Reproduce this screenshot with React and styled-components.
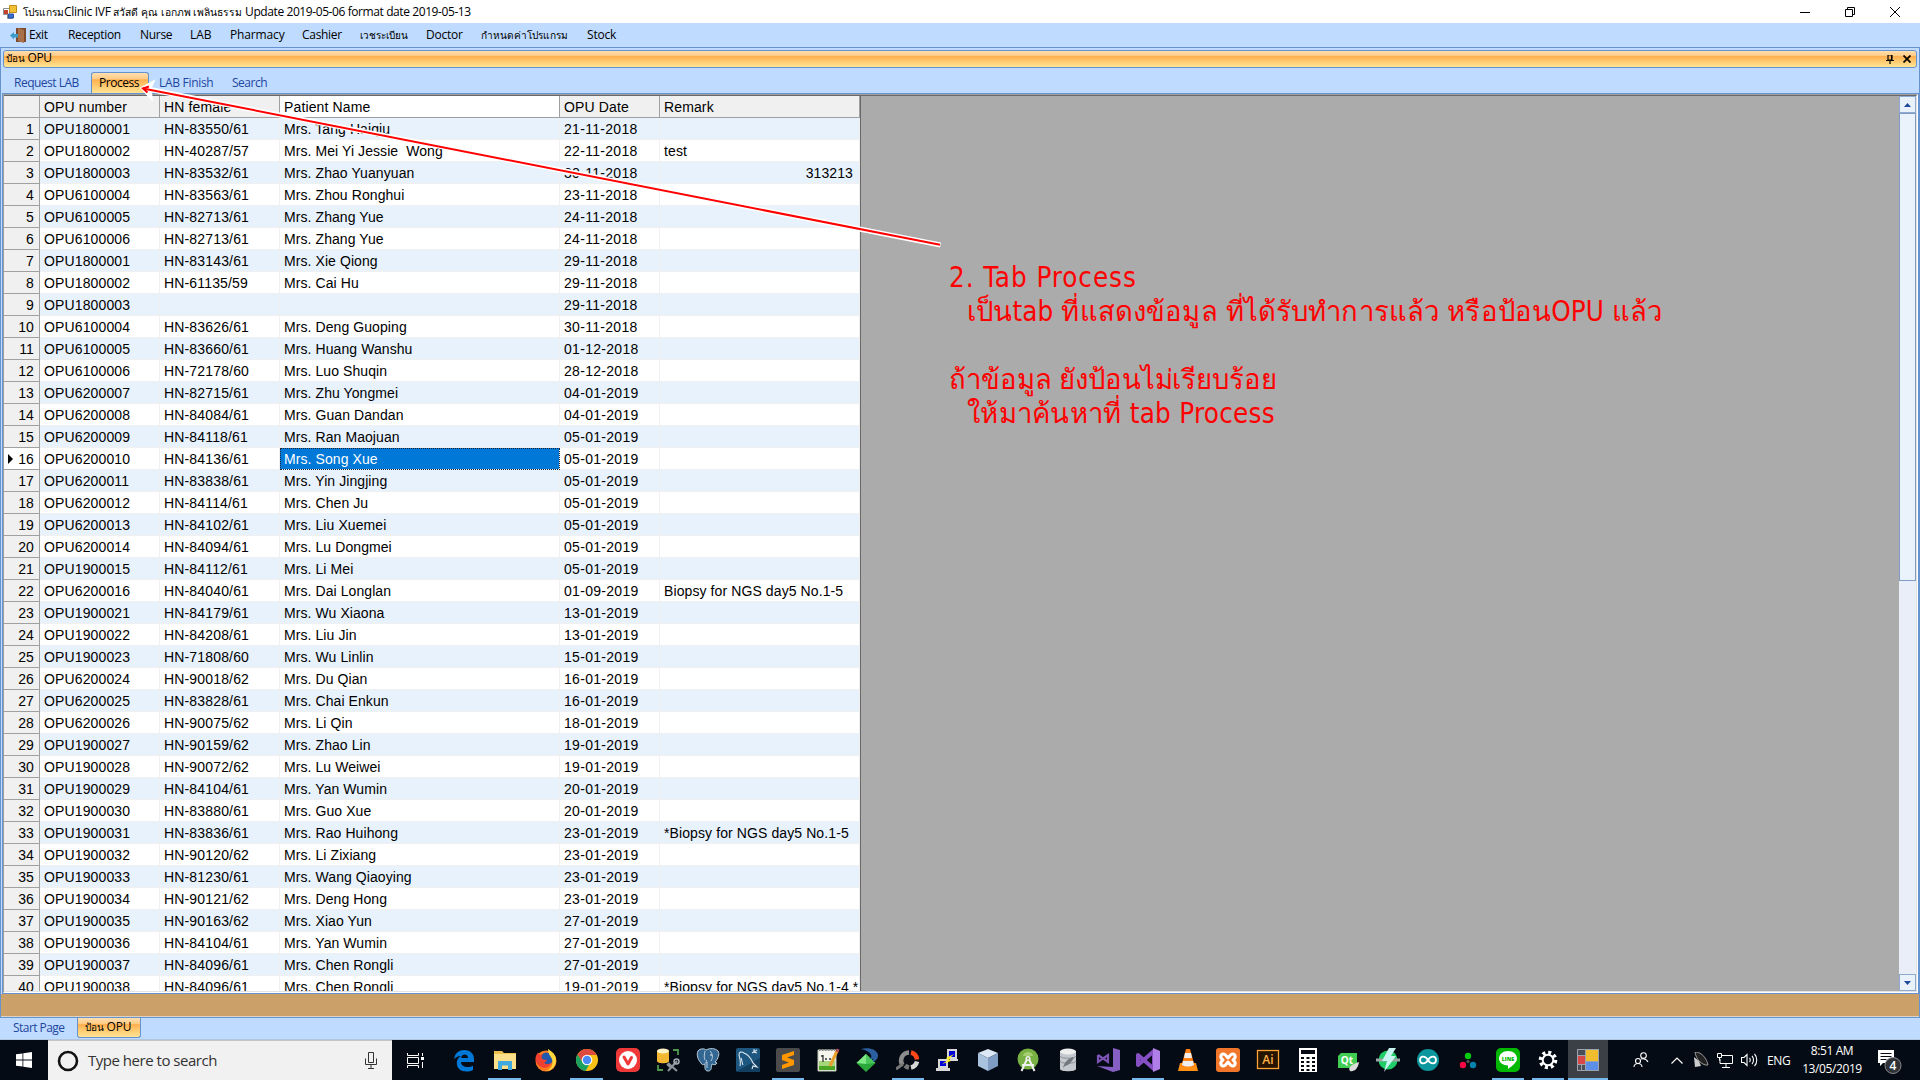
import React from "react";
import styled, { createGlobalStyle, css } from "styled-components";

const ui = `"Open Sans", "Noto Sans", "DejaVu Sans", sans-serif`;
const gridFont = `"Liberation Sans", "DejaVu Sans", sans-serif`;
const orange = "linear-gradient(#ffdfaf 0%, #ffcb85 30%, #ffb050 34%, #ffc76c 62%, #ffe596 100%)";

const Global = createGlobalStyle`
  * { box-sizing: border-box; }
  html, body { margin: 0; overflow: hidden; background: #bfdbff; }
  svg { display: block; flex: none; }
`;

const Screen = styled.div`
  position: relative;
  width: 1920px;
  height: 1080px;
  display: flex;
  flex-direction: column;
  overflow: hidden;
  font-family: ${ui};
  font-size: 12px;
  color: #000;
`;

const Row = styled.div`
  display: flex;
  align-items: center;
`;

const TitleBar = styled(Row)`
  height: 23px;
  flex: none;
  background: #fff;
  padding: 0 0 0 3px;
`;
const TitleText = styled.div`
  display: flex;
  margin-left: 6px;
  white-space: pre;
  line-height: 22px;
`;
const WindowButtons = styled(Row)`
  margin-left: auto;
  margin-right: 20px;
  gap: 35px;
  height: 20px;
`;

const MenuBar = styled(Row)`
  height: 24px;
  flex: none;
  background: #bfdbff;
  padding-left: 10px;
`;
const MenuItem = styled.div`
  width: ${(p) => p.$w}px;
  flex: none;
  white-space: nowrap;
  line-height: 24px;
  ${(p) => p.$ls !== undefined && css`letter-spacing: ${p.$ls}px;`}
  ${(p) => p.$fs && css`font-size: ${p.$fs}px;`}
`;
const MenuIcon = styled.div`
  width: 19px;
  flex: none;
`;
const Label = styled.span`
  display: inline-block;
  white-space: pre;
  ${(p) => p.$ls !== undefined && css`letter-spacing: ${p.$ls}px;`}
  ${(p) => p.$fs && css`font-size: ${p.$fs}px;`}
`;

const DockWindow = styled.div`
  height: 971px;
  flex: none;
  display: flex;
  flex-direction: column;
  border: 1px solid #6593cf;
`;
const DockTitle = styled(Row)`
  height: 18px;
  margin: 2px 2px 0;
  flex: none;
  border: 1px solid #6593cf;
  border-radius: 3px;
  background: ${orange};
  padding: 0 5px 0 2px;
  justify-content: space-between;
`;
const DockCaption = styled.div`
  margin-top: -2px;
  line-height: 15px;
`;
const DockActions = styled(Row)`
  gap: 9px;
`;
const TabStrip = styled.div`
  display: flex;
  align-items: flex-end;
  height: 25px;
  flex: none;
  padding-left: 13px;
  color: #1e46a0;
`;
const Tab = styled.div`
  width: ${(p) => p.$w}px;
  height: 21px;
  line-height: 22px;
  white-space: nowrap;
  letter-spacing: ${(p) => p.$ls || 0}px;
  ${(p) =>
    p.$active &&
    css`
      color: #000;
      line-height: 20px;
      border: 1px solid #6593cf;
      border-bottom: 0;
      border-radius: 3px 3px 0 0;
      background: ${orange};
      padding-left: 7px;
      margin-right: 10px;
    `}
`;

const GridFrame = styled.div`
  height: 901px;
  flex: none;
  margin-left: 1px;
  border: 1px solid #6593cf;
`;
const GridView = styled.div`
  height: 899px;
  display: flex;
  border-top: 1px solid #a0a0a0;
  border-left: 1px solid #a0a0a0;
  border-right: 1px solid #fff;
  border-bottom: 1px solid #fff;
  background: #ababab;
  overflow: hidden;
`;
const GridInner = styled.div`
  flex: 1;
  display: flex;
  border-top: 1px solid #696969;
  border-bottom: 1px solid #e3e3e3;
  border-right: 1px solid #e3e3e3;
  overflow: hidden;
`;
const Table = styled.div`
  width: 857px;
  flex: none;
  border-right: 1px solid #696969;
  overflow: hidden;
  font-family: ${gridFont};
  font-size: 14px;
  letter-spacing: 0.13px;
  line-height: 21px;
  margin-right: auto;
`;
const GridRow = styled.div`
  display: grid;
  grid-template-columns: 36px 120px 120px 280px 100px 200px;
  height: 22px;
  background: ${(p) => (p.$odd ? "#e8f2fd" : "#fff")};
`;
const Cell = styled.div`
  border-right: 1px solid #f0f0f0;
  border-bottom: 1px solid #f0f0f0;
  padding: 1px 6px 0 4px;
  white-space: pre;
  overflow: hidden;
  height: 22px;
  text-align: ${(p) => (p.$right ? "right" : "left")};
  ${(p) => p.$ls && css`letter-spacing: ${p.$ls}px;`}
  ${(p) =>
    p.$selected &&
    css`
      background: #0078d7;
      color: #fff;
      outline: 1px dotted #1a2a3a;
      outline-offset: -1px;
    `}
`;
const HeadCell = styled(Cell)`
  background: ${(p) => (p.$white ? "#fff" : "#f0f0f0")};
  border-color: #a0a0a0;
`;
const NumberCell = styled(HeadCell)`
  display: flex;
  align-items: center;
  justify-content: flex-end;
  padding: 1px 5px 0 3px;
`;
const CurrentMark = styled.i`
  margin-right: auto;
  margin-left: 1px;
  border: 5px solid transparent;
  border-left-color: #000;
  border-right-width: 0;
`;

const ScrollBar = styled.div`
  width: 17px;
  display: flex;
  flex-direction: column;
  background: #e9f0fa;
`;
const ScrollButton = styled.div`
  height: 17px;
  flex: none;
  display: flex;
  align-items: center;
  justify-content: center;
  border: 1px solid #8faad0;
  background: #e9f1fb;
`;
const Thumb = styled.div`
  height: 468px;
  border: 1px solid #7f9bc4;
  background: #eaf2fb;
`;
const Track = styled.div`
  flex: 1;
  background: #e9eef8;
`;

const BrownBar = styled.div`
  flex: 1;
  background: #cca169;
  border-bottom: 1px solid #e0d2bf;
`;
const BottomTabs = styled(Row)`
  height: 22px;
  flex: none;
  align-items: flex-start;
  padding-left: 13px;
  color: #1e46a0;
  border-bottom: 1px solid #b3c6de;
`;
const BottomTab = styled.div`
  width: ${(p) => p.$w}px;
  height: 20px;
  line-height: 20px;
  white-space: nowrap;
  letter-spacing: -0.55px;
  ${(p) =>
    p.$active &&
    css`
      color: #000;
      line-height: 17px;
      letter-spacing: 0;
      border: 1px solid #6593cf;
      border-top: 0;
      border-radius: 0 0 3px 3px;
      background: ${orange};
      padding-left: 7px;
    `}
`;

const Annotation = styled.svg`
  position: absolute;
  left: 0;
  top: 0;
  pointer-events: none;
`;
const Note = styled.div`
  position: absolute;
  left: 949px;
  top: 260px;
  color: #f00;
  font-family: "DejaVu Sans Condensed", "Noto Sans", sans-serif;
  font-size: 27.5px;
  line-height: 34px;
  white-space: pre;
`;
const NoteLine = styled.div`
  height: 34px;
  padding-left: ${(p) => p.$indent || 0}px;
  letter-spacing: ${(p) => p.$ls || 0}px;
`;

const TaskBar = styled.div`
  height: 40px;
  flex: none;
  display: flex;
  background: #050b14;
  color: #fff;
`;
const Start = styled.div`
  width: 48px;
  display: grid;
  place-items: center;
`;
const SearchBox = styled(Row)`
  width: 344px;
  background: #f1f1f1;
  border-top: 1px solid #c4c4c4;
  padding: 0 15px 0 9px;
  color: #333;
  font-size: 15px;
`;
const SearchLabel = styled.div`
  margin: -2px 0 0 9px;
  flex: 1;
  letter-spacing: -0.48px;
`;
const TaskView = styled.div`
  width: 51px;
  display: flex;
  align-items: center;
  padding-left: 15px;
`;
const Apps = styled.div`
  display: grid;
  grid-template-columns: repeat(5, 41px) repeat(3, 40px) repeat(21, 40px);
`;
const AppButton = styled.div`
  display: grid;
  place-items: center;
  position: relative;
  background: ${(p) => (p.$active ? "#3b3f46" : "transparent")};
  &::after {
    content: "";
    position: absolute;
    bottom: 0;
    left: ${(p) => (p.$active ? 0 : 4)}px;
    right: ${(p) => (p.$active ? 0 : 4)}px;
    height: 2px;
    background: ${(p) => (p.$open ? "#76b9ed" : "transparent")};
  }
`;
const Tray = styled(Row)`
  flex: 1;
  padding-left: 25px;
`;
const TrayItem = styled.div`
  width: ${(p) => p.$w}px;
  flex: none;
  white-space: nowrap;
  letter-spacing: -0.3px;
`;
const Clock = styled.div`
  width: 76px;
  text-align: center;
  line-height: 18px;
  letter-spacing: -0.4px;
`;
const Notifications = styled.svg`
  margin-top: 4px;
`;

const rows = `OPU1800001|83550/61|Tang Haiqiu|21-11-2018
OPU1800002|40287/57|Mei Yi Jessie  Wong|22-11-2018|test
OPU1800003|83532/61|Zhao Yuanyuan|30-11-2018|313213
OPU6100004|83563/61|Zhou Ronghui|23-11-2018
OPU6100005|82713/61|Zhang Yue|24-11-2018
OPU6100006|82713/61|Zhang Yue|24-11-2018
OPU1800001|83143/61|Xie Qiong|29-11-2018
OPU1800002|61135/59|Cai Hu|29-11-2018
OPU1800003|||29-11-2018
OPU6100004|83626/61|Deng Guoping|30-11-2018
OPU6100005|83660/61|Huang Wanshu|01-12-2018
OPU6100006|72178/60|Luo Shuqin|28-12-2018
OPU6200007|82715/61|Zhu Yongmei|04-01-2019
OPU6200008|84084/61|Guan Dandan|04-01-2019
OPU6200009|84118/61|Ran Maojuan|05-01-2019
OPU6200010|84136/61|Song Xue|05-01-2019
OPU6200011|83838/61|Yin Jingjing|05-01-2019
OPU6200012|84114/61|Chen Ju|05-01-2019
OPU6200013|84102/61|Liu Xuemei|05-01-2019
OPU6200014|84094/61|Lu Dongmei|05-01-2019
OPU1900015|84112/61|Li Mei|05-01-2019
OPU6200016|84040/61|Dai Longlan|01-09-2019|Biopsy for NGS day5 No.1-5
OPU1900021|84179/61|Wu Xiaona|13-01-2019
OPU1900022|84208/61|Liu Jin|13-01-2019
OPU1900023|71808/60|Wu Linlin|15-01-2019
OPU6200024|90018/62|Du Qian|16-01-2019
OPU6200025|83828/61|Chai Enkun|16-01-2019
OPU6200026|90075/62|Li Qin|18-01-2019
OPU1900027|90159/62|Zhao Lin|19-01-2019
OPU1900028|90072/62|Lu Weiwei|19-01-2019
OPU1900029|84104/61|Yan Wumin|20-01-2019
OPU1900030|83880/61|Guo Xue|20-01-2019
OPU1900031|83836/61|Rao Huihong|23-01-2019|*Biopsy for NGS day5 No.1-5
OPU1900032|90120/62|Li Zixiang|23-01-2019
OPU1900033|81230/61|Wang Qiaoying|23-01-2019
OPU1900034|90121/62|Deng Hong|23-01-2019
OPU1900035|90163/62|Xiao Yun|27-01-2019
OPU1900036|84104/61|Yan Wumin|27-01-2019
OPU1900037|84096/61|Chen Rongli|27-01-2019
OPU1900038|84096/61|Chen Rongli|19-01-2019|*Biopsy for NGS day5 No.1-4 *`
  .split("\n")
  .map((line) => line.split("|"));

const Icon = ({ children, s = 24 }) => (
  <svg width={s} height={s} viewBox="0 0 24 24">
    {children}
  </svg>
);

const icons = {
  edge: (
    <Icon>
      <path fill="#0078d7" d="M2 11C3 5 7 2 12.500 2 18.500 2 22 6 22 11v3H9c0 3.500 3 5 6.500 5 2.300 0 4.300-.6 5.500-1.300V22c-2 1-4 1.500-6.500 1.500C8.500 23.500 4.800 20 4.800 15c0-3.200 1.700-5.500 4.200-7C5.500 8 3.500 9.500 2 11zm7.200-1H16c0-2.200-1.300-3.500-3.300-3.500-2 0-3.200 1.400-3.500 3.500z" />
    </Icon>
  ),
  folder: (
    <Icon>
      <path fill="#eabf4e" d="M1 3h8l2 2h12v4H1z" />
      <path fill="#fde08a" d="M1 6h22v15H1z" />
      <path fill="#3fa9e0" d="M5 13h14v9h-4v-4.500H9V22H5z" />
    </Icon>
  ),
  firefox: (
    <Icon>
      <circle cx="12" cy="13" r="10.500" fill="#ff7b1c" />
      <circle cx="12.500" cy="11" r="6.500" fill="#1f58ac" />
      <path fill="#f0402f" d="M1.500 11c0-3 1-4.500 2.500-6.500L6 7l3-.5c-1 1-2 2-1 4 1 1.500 3 1 5 1.500-1 2-2 2-3 3 2 1.500 5 1.500 7-.5-1 4-5 6.500-9 5C4 18 2 15 1.500 11z" />
      <path fill="#ffd83d" d="M14 1c5 3 8.500 7 8 12-.5 6-5 10-10 10 4-1.500 7-5 6.500-10C18 9 14 7 14 1z" />
    </Icon>
  ),
  chrome: (
    <Icon>
      <circle cx="12" cy="12" r="11" fill="#fbc116" />
      <path fill="#dd4b3e" d="M2.500 6.500a11 11 0 0 1 19 0L22 7H12L7 14z" />
      <path fill="#1aa15f" d="M2.500 6.500 8 15l6 2-3.500 6A11 11 0 0 1 2.500 6.500z" />
      <circle cx="12" cy="12" r="5.300" fill="#fff" />
      <circle cx="12" cy="12" r="4.200" fill="#4a8af4" />
    </Icon>
  ),
  vivaldi: (
    <Icon>
      <rect width="24" height="24" rx="5" fill="#ef3939" />
      <circle cx="12" cy="12" r="9" fill="#fff" />
      <path fill="none" stroke="#ef3939" strokeWidth="3" strokeLinecap="round" strokeLinejoin="round" d="m8 9 4 7 3.500-6.500" />
    </Icon>
  ),
  dbtools: (
    <Icon>
      <path d="M17 2h5v5M2 17v5h5" fill="none" stroke="#4c9a4a" strokeWidth="1.800" />
      <path fill="#f4b731" d="M1 3v10c0 3 12 3 12 0V3z" />
      <ellipse cx="7" cy="3" rx="6" ry="2.500" fill="#fff3c4" />
      <path d="m12 15 9 8m-9 0 9-10m-7 6-3-3" stroke="#8d959c" strokeWidth="2" fill="none" />
      <circle cx="20.500" cy="13.500" r="2.500" fill="none" stroke="#a4abb1" strokeWidth="1.500" />
    </Icon>
  ),
  postgres: (
    <Icon>
      <path fill="#336791" stroke="#b9cede" strokeWidth="1" d="M3 2c3-2 6-1 7 0 4-2 9-2 12 1 2 3 0 8-3 11l2 1c-1 2-3 2-5 1-1 3 0 7-4 7s-3-5-3-7c-2 1-3 1-4-1C1 11 0 4 3 2z" />
      <path d="M9 3c-1 4-1 7 0 9m5-9c3 3 3 7 1 10m-4 1v6m-2-5c2 0 2-1 1-3" fill="none" stroke="#b9cede" />
      <circle cx="15" cy="7" r=".8" fill="#fff" />
    </Icon>
  ),
  mysql: (
    <Icon>
      <rect width="24" height="24" rx="2" fill="#1d567e" />
      <path d="M0 24 24 10v14z" fill="#123f60" />
      <path fill="none" stroke="#dbe9f2" strokeWidth="1.100" d="M4 18c1-4 0-7-1-11 0-3 2-4 5-2 5 2 7 5 9 10l4 4-4-1-1 3M7 17c-1-2-1-5-2-7m11-5 5-3m-3-1v3l3 1" />
    </Icon>
  ),
  sublime: (
    <Icon>
      <rect width="24" height="24" rx="2" fill="#4b4b4b" />
      <path fill="#ff9800" d="m6 7 12-4v4l-7 2.500 7 2.500v5L6 21v-4l7-2.500L6 12z" />
    </Icon>
  ),
  notepad: (
    <Icon>
      <path fill="#f5f5ee" stroke="#b9c4b0" d="M2 2h18v21H2z" />
      <path fill="#a5d67a" d="M3 13h16v9H3z" />
      <path fill="#4da524" d="M3 18h16v4H3z" />
      <path d="M3 2h16" stroke="#888" strokeDasharray="1.500 1.500" strokeWidth="2" />
      <path d="M7 7v7M5 8h2M9 11h2m2 0h2" stroke="#333" strokeWidth="1.300" />
      <path d="m21 3-7 15" stroke="#e9a02c" strokeWidth="3" />
      <path d="m22 1-1 3" stroke="#b5505b" strokeWidth="3" />
    </Icon>
  ),
  diamond: (
    <Icon>
      <path fill="#2aa83c" d="m10 6 9.500 9L10 24 .5 15z" />
      <path fill="#7fe887" d="m10 6-9.500 9L10 16z" />
      <path fill="#4ac75a" d="m10 6 9.500 9L10 16z" />
      <path fill="#2b5f9f" d="M5 1c9-2 16 1 17 6 0 3-1 5-5 7v-3h-4c4-1 4-7-8-10z" />
    </Icon>
  ),
  ring: (
    <Icon>
      <path fill="none" stroke="#8c8c8c" strokeWidth="4.500" d="M6.500 17a8 8 0 0 1 6.500-12.500" />
      <path fill="none" stroke="#ff4719" strokeWidth="4.500" d="M15 4.500a8 8 0 0 1 6 7" />
      <path fill="none" stroke="#d7d7d7" strokeWidth="4.500" d="M21 13.500a8 8 0 0 1-6 6" />
      <path fill="none" stroke="#777" strokeWidth="4.500" d="M13 19.500a8 8 0 0 1-4-2" />
      <path d="m0 21 7-5" stroke="#777" strokeWidth="3" />
    </Icon>
  ),
  putty: (
    <Icon>
      <path fill="#d8d8d8" d="M11 1h10v10H11zM2 11h10v9H2zM0 20h14v3H0zM14 11h8v2h-8z" />
      <path fill="#0000d8" d="M13 3h6v6h-6zM4 13h6v5H4z" />
      <path fill="#ffee20" d="m18 6-8 4 2 2-6 4 9-3-2-2z" />
    </Icon>
  ),
  cube: (
    <Icon>
      <path fill="#dce9f5" d="m12 1 10 4-10 5L2 5z" />
      <path fill="#a9c2dd" d="M2 5l10 5v13L2 18z" />
      <path fill="#7f9cc2" d="m22 5-10 5v13l10-5z" />
    </Icon>
  ),
  android: (
    <Icon>
      <circle cx="12" cy="11" r="10.500" fill="#78b043" />
      <path fill="#a4ce70" d="M7 8a5 4 0 0 1 10 0z" />
      <path fill="none" stroke="#eef1ee" strokeWidth="2" d="M12 9 5.500 23M12 9l6.500 14M6 17h12" />
      <circle cx="12" cy="10.500" r="2.500" fill="#eee" />
      <circle cx="12" cy="10.500" r="1" fill="#78b043" />
    </Icon>
  ),
  sqlite: (
    <Icon>
      <path fill="#c5c8cc" d="M4 3v18c0 3 16 3 16 0V3z" />
      <path fill="none" stroke="#8d9298" d="M4 8c0 3 16 3 16 0M4 13c0 3 16 3 16 0" />
      <ellipse cx="12" cy="3.500" rx="8" ry="3" fill="#eee" />
      <path fill="#73787d" d="M7 20C8 15 12 10 18 9c-2 5-5 8-9 9z" />
    </Icon>
  ),
  vs: (
    <Icon>
      <path fill="none" stroke="#7d54b5" strokeWidth="2.200" d="M2 7v7l10-7v7L2 7" />
      <path fill="#865fc5" d="m17 0 7 2v20l-7 2-16-6 16 1z" />
    </Icon>
  ),
  vs19: (
    <Icon>
      <path fill="none" stroke="#8650c4" strokeWidth="4" strokeLinejoin="round" d="m2 7 16 14V3L2 17z" />
      <path fill="#b07ee8" d="m17 0 7 3v18l-7 3z" />
    </Icon>
  ),
  vlc: (
    <Icon>
      <path fill="#ff9014" d="m4 15-2 8h20l-2-8z" />
      <path fill="#ff8010" d="m10 1-5 18h14L14 1z" />
      <path fill="#eee" d="m9 5-1 5h8l-1-5zm-2 8-1 4c3 2 9 2 12 0l-1-4z" />
    </Icon>
  ),
  xampp: (
    <Icon>
      <rect width="24" height="24" rx="3" fill="#f1762a" />
      <path fill="none" stroke="#fff" strokeWidth="3" strokeLinecap="round" strokeLinejoin="round" d="M9.500 7C5 4 3 9 7 12c-4 3-2 8 2.500 5L12 14l2.500 3c4.500 3 6.500-2 2.500-5 4-3 2-8-2.500-5L12 10z" />
    </Icon>
  ),
  ai: (
    <Icon>
      <rect x="1.500" y="2.500" width="21" height="18" fill="#261300" stroke="#ffa432" strokeWidth="1.300" />
      <text x="12" y="16" textAnchor="middle" fontFamily="Open Sans, sans-serif" fontWeight="600" fontSize="12" fill="#ffb04a">Ai</text>
    </Icon>
  ),
  calc: (
    <Icon>
      <path fill="#fff" d="M3 0h18v24H3z" />
      <path fill="#060b13" d="M5 2h14v4H5z" />
      <path stroke="#060b13" strokeWidth="2" strokeDasharray="3 2.500" d="M5 10h14M5 14h14M5 18h14M5 22h14" />
    </Icon>
  ),
  qt: (
    <Icon>
      <path fill="#41cd52" d="M5 5h16v12l-4 3H2V8z" />
      <text x="11" y="16" textAnchor="middle" fontFamily="Open Sans, sans-serif" fontWeight="700" fontSize="10" fill="#fff">Qt</text>
      <path fill="#dcdcdc" d="M23 14c-1 7-5 10-9 9-3-4 3-7 9-9z" />
    </Icon>
  ),
  bolt: (
    <Icon>
      <circle cx="12" cy="12" r="9.500" fill="#1fce66" />
      <path d="M0 12h24" stroke="#9aa7a5" strokeWidth="3" />
      <path fill="#c7f4f0" d="M13 0h7l-5 8h5L8 24l3-11H6z" />
    </Icon>
  ),
  arduino: (
    <Icon>
      <circle cx="12" cy="12" r="11" fill="#0b979d" />
      <path fill="none" stroke="#fff" strokeWidth="1.800" d="M12 12c-3-5-8-4-8 0s5 5 8 0 8-4 8 0-5 5-8 0z" />
    </Icon>
  ),
  dots: (
    <Icon>
      <circle cx="12" cy="8" r="3.200" fill="#07cb10" />
      <circle cx="7" cy="17" r="3.200" fill="#f90742" />
      <circle cx="17" cy="17" r="3.200" fill="#0782ac" />
      <circle cx="12" cy="13.500" r="1.600" fill="#555" />
    </Icon>
  ),
  line: (
    <Icon>
      <rect width="24" height="24" rx="5" fill="#00b900" />
      <path fill="#fff" d="M12 3c5 0 9 3 9 7.500 0 4-5 7.500-9 10.500v-3.500c-5 0-9-3-9-7S7 3 12 3z" />
      <text x="12" y="13" textAnchor="middle" fontFamily="Open Sans, sans-serif" fontWeight="800" fontSize="5.500" fill="#00b900">LINE</text>
    </Icon>
  ),
  gear: (
    <Icon>
      <circle cx="12" cy="12" r="7.500" fill="none" stroke="#fff" strokeWidth="3.600" strokeDasharray="3 2.890" />
      <circle cx="12" cy="12" r="5.300" fill="none" stroke="#fff" strokeWidth="2" />
    </Icon>
  ),
  form: (
    <Icon>
      <path fill="#9ba4ae" d="M1 1h22v22H1z" />
      <path fill="#4a4e55" d="M2 2h7v5H2zM2 17h3v5H2zM6 17h3v5H6z" />
      <path fill="#d84848" d="M2 8h7v8H2z" />
      <path fill="#f1bd2e" d="M10 2h12v11H10z" />
      <path fill="#5b8fe8" d="M10 14h12v8H10z" />
    </Icon>
  ),
};
const openApps = ["folder", "chrome", "sublime", "ring", "vs19", "line", "gear", "form"];

const AppLogo = () => (
  <svg width="14" height="14" viewBox="0 0 14 14">
    <path fill="#fff" stroke="#8a8f96" d="M.5 3.500h6v6h-6zM4.500 9.500h5v4h-5z" />
    <path fill="#c7422c" d="M1 5h4v4H1z" />
    <path fill="#f2c035" stroke="#c08f1c" d="M6.500.5h7v7h-7z" />
    <path fill="#3a6fd0" stroke="#2d509a" d="M5.500 9h5v4h-5z" />
  </svg>
);

const ExitIcon = () => (
  <svg width="16" height="16" viewBox="0 0 16 16">
    <path fill="#7c4a2c" d="M6 1h10v14H6z" />
    <path fill="#a9714a" d="m8 1 6 2v13l-6-2z" />
    <path fill="#3d9ccc" d="M0 8.500 4 5v2h4v3.500H4v2z" />
  </svg>
);

const menu = [
  ["Exit", 39, -0.45],
  ["Reception", 72, -0.33],
  ["Nurse", 50, -0.3],
  ["LAB", 40, -0.1],
  ["Pharmacy", 72, -0.15],
  ["Cashier", 58, -0.3],
  ["เวชระเบียน", 66, 0, 10],
  ["Doctor", 55, -0.25],
  ["กำหนดค่าโปรแกรม", 106, 0, 10.1],
  ["Stock", 40, -0.2],
];

export default function App() {
  return (
    <Screen>
      <Global />
      <TitleBar>
        <AppLogo />
        <TitleText>
          <Label $fs={10.2}>โปรแกรม</Label>
          <Label $ls={-0.3}>Clinic IVF </Label>
          <Label $fs={10.3}>สวัสดี คุณ เอกภพ เพลินธรรม </Label>
          <Label $ls={-0.41}>Update 2019-05-06 format date 2019-05-13</Label>
        </TitleText>
        <WindowButtons>
          <svg width="10" height="10" viewBox="0 0 10 10"><path d="M0 5.500h10" stroke="#000" /></svg>
          <svg width="10" height="10" viewBox="0 0 10 10"><path d="M.5 2.500h7v7h-7zM2.500 2.500v-2h7v7h-2" fill="none" stroke="#000" /></svg>
          <svg width="10" height="10" viewBox="0 0 10 10"><path d="m0 0 10 10M10 0 0 10" stroke="#000" /></svg>
        </WindowButtons>
      </TitleBar>
      <MenuBar>
        <MenuIcon><ExitIcon /></MenuIcon>
        {menu.map(([t, w, ls, fs]) => (
          <MenuItem key={t} $w={w} $ls={ls} $fs={fs}>{t}</MenuItem>
        ))}
      </MenuBar>
      <DockWindow>
        <DockTitle>
          <DockCaption><Label $fs={9.8}>ป้อน </Label><Label $ls={-0.4}>OPU</Label></DockCaption>
          <DockActions>
            <svg width="8" height="9" viewBox="0 0 8 9"><path d="M2 0h4v5H2zM0 5.500h8M4 5v4M5.500 0v5" fill="none" stroke="#000" strokeWidth="1.200" /></svg>
            <svg width="8" height="8" viewBox="0 0 8 8"><path d="m.5.5 7 7m0-7-7 7" stroke="#000" strokeWidth="1.700" /></svg>
          </DockActions>
        </DockTitle>
        <TabStrip>
          <Tab $w={77} $ls={-0.5}>Request LAB</Tab>
          <Tab $w={58} $ls={-0.45} $active>Process</Tab>
          <Tab $w={73} $ls={-0.3}>LAB Finish</Tab>
          <Tab $w={50} $ls={-0.5}>Search</Tab>
        </TabStrip>
        <GridFrame>
          <GridView>
            <GridInner>
              <Table>
                <GridRow>
                  <HeadCell />
                  <HeadCell>OPU number</HeadCell>
                  <HeadCell>HN female</HeadCell>
                  <HeadCell $white>Patient Name</HeadCell>
                  <HeadCell>OPU Date</HeadCell>
                  <HeadCell>Remark</HeadCell>
                </GridRow>
                {rows.map(([opu, hn, name, date, remark], i) => {
                  const odd = i % 2 === 0;
                  const current = i === 15;
                  return (
                    <GridRow key={i} $odd={odd}>
                      <NumberCell $white={current}>
                        {current && <CurrentMark />}
                        {i + 1}
                      </NumberCell>
                      <Cell>{opu}</Cell>
                      <Cell $ls={0.16}>{hn && `HN-${hn}`}</Cell>
                      <Cell $ls={0.08} $selected={current}>{name && `Mrs. ${name}`}</Cell>
                      <Cell $ls={0.3}>{date}</Cell>
                      <Cell $ls={0.1} $right={/^\d+$/.test(remark || "")}>{remark}</Cell>
                    </GridRow>
                  );
                })}
              </Table>
              <ScrollBar>
                <ScrollButton><svg width="7" height="4" viewBox="0 0 7 4"><path fill="#1f4aa0" d="M3.500 0 7 4H0z" /></svg></ScrollButton>
                <Thumb />
                <Track />
                <ScrollButton><svg width="7" height="4" viewBox="0 0 7 4"><path fill="#1f4aa0" d="M0 0h7L3.500 4z" /></svg></ScrollButton>
              </ScrollBar>
            </GridInner>
          </GridView>
        </GridFrame>
        <BrownBar />
      </DockWindow>
      <BottomTabs>
        <BottomTab $w={64}>Start Page</BottomTab>
        <BottomTab $w={64} $active><Label $fs={10}>ป้อน </Label><Label $ls={-0.2}>OPU</Label></BottomTab>
      </BottomTabs>
      <TaskBar>
        <Start>
          <svg width="16" height="16" viewBox="0 0 16 16"><path fill="#fff" d="m0 2.300 6.500-.9v6.200H0zM7.300 1.300 16 0v7.600H7.300zM0 8.400h6.500v6.200L0 13.700zM7.300 8.400H16V16l-8.700-1.300z" /></svg>
        </Start>
        <SearchBox>
          <svg width="22" height="22" viewBox="0 0 22 22"><circle cx="11" cy="11" r="9" fill="none" stroke="#111" strokeWidth="2.600" /></svg>
          <SearchLabel>Type here to search</SearchLabel>
          <svg width="12" height="17" viewBox="0 0 12 17"><path d="M3.500.5h5v10h-5zM.5 6.500v6h11v-6M6 12.500v4M3 16.500h6" fill="none" stroke="#333" /></svg>
        </SearchBox>
        <TaskView>
          <svg width="17" height="15" viewBox="0 0 17 15"><path d="M.5 0v2.500h11V0M.5 4.500h11v6H.5zM.5 15v-2.500h11V15M15.500 0v3m0 6v6" fill="none" stroke="#fff" /><path fill="#fff" d="M14 4h3v3h-3z" /></svg>
        </TaskView>
        <Apps>
          {Object.entries(icons).map(([name, icon]) => (
            <AppButton key={name} $open={openApps.includes(name)} $active={name === "form"}>{icon}</AppButton>
          ))}
        </Apps>
        <Tray>
          <TrayItem $w={38}><svg width="16" height="16" viewBox="0 0 16 16" fill="none" stroke="#fff" strokeWidth="1.100"><circle cx="10.500" cy="3.500" r="2.800" /><circle cx="5" cy="9" r="2.500" /><path d="M1 15c0-2 2-3.500 4-3.500S9 13 9 15M8 7c4-1 6 1 7 3" /></svg></TrayItem>
          <TrayItem $w={21}><svg width="12" height="7" viewBox="0 0 12 7"><path d="m.5 6.500 5.500-5.500 5.500 5.500" fill="none" stroke="#fff" strokeWidth="1.200" /></svg></TrayItem>
          <TrayItem $w={25}><svg width="17" height="16" viewBox="0 0 17 16"><path d="M3 0c7 0 12 7 13 13-5 1-12-5-13-13z" fill="#222" stroke="#999" /><path d="m2 5 5 4 2 5-6 1z" fill="#ccc" /></svg></TrayItem>
          <TrayItem $w={24}><svg width="16" height="15" viewBox="0 0 16 15"><path d="M5 2.500h10.500v8H3V6M9 10.500v4M5 14.500h8M.5.500h4v4h-4zM2.500 4.500v3" fill="none" stroke="#fff" /></svg></TrayItem>
          <TrayItem $w={26}><svg width="17" height="14" viewBox="0 0 17 14"><path d="M.5 4.500H3l3-3v11l-3-3H.5zM8.500 5c1 1 1 3 0 4M11 3c2 2 2 6 0 8m2.500-10c3 3 3 9 0 12" fill="none" stroke="#fff" strokeWidth="1.100" /></svg></TrayItem>
          <TrayItem $w={27}>ENG</TrayItem>
          <Clock>8:51 AM<br />13/05/2019</Clock>
          <Notifications width="32" height="26" viewBox="0 0 32 26">
            <path fill="#fff" d="M8 1h16v13H13l-3 3v-3H8z" />
            <path d="M10.500 4.500h11M10.500 7.500h11M10.500 10.500h6" stroke="#060b13" />
            <circle cx="23" cy="16.500" r="8" fill="#2e3238" stroke="#888" />
            <text x="23" y="21" textAnchor="middle" fontFamily="Open Sans, sans-serif" fontWeight="600" fontSize="12" fill="#fff">4</text>
          </Notifications>
        </Tray>
      </TaskBar>
      <Annotation width="1000" height="300" viewBox="0 0 1000 300">
        <path d="M145 88.500 940.500 245" stroke="#fff" strokeWidth="5" />
        <path d="m141 88 13-7-3 7 1 12z" fill="#fff" stroke="#fff" strokeWidth="1.500" />
        <path d="M143 88.400 940 244.800" stroke="#f00" strokeWidth="2" />
        <path d="M149 86.500 143 88.400l4.500 4" fill="none" stroke="#f00" strokeWidth="2" />
      </Annotation>
      <Note>
        <NoteLine $ls={0.95}>2. Tab Process</NoteLine>
        <NoteLine $indent={18} $ls={0.14}>เป็นtab ที่แสดงข้อมูล ที่ได้รับทำการแล้ว หรือป้อนOPU แล้ว</NoteLine>
        <NoteLine />
        <NoteLine $ls={-0.1}>ถ้าข้อมูล ยังป้อนไม่เรียบร้อย</NoteLine>
        <NoteLine $indent={18} $ls={0.28}>ให้มาค้นหาที่ tab Process</NoteLine>
      </Note>
    </Screen>
  );
}
